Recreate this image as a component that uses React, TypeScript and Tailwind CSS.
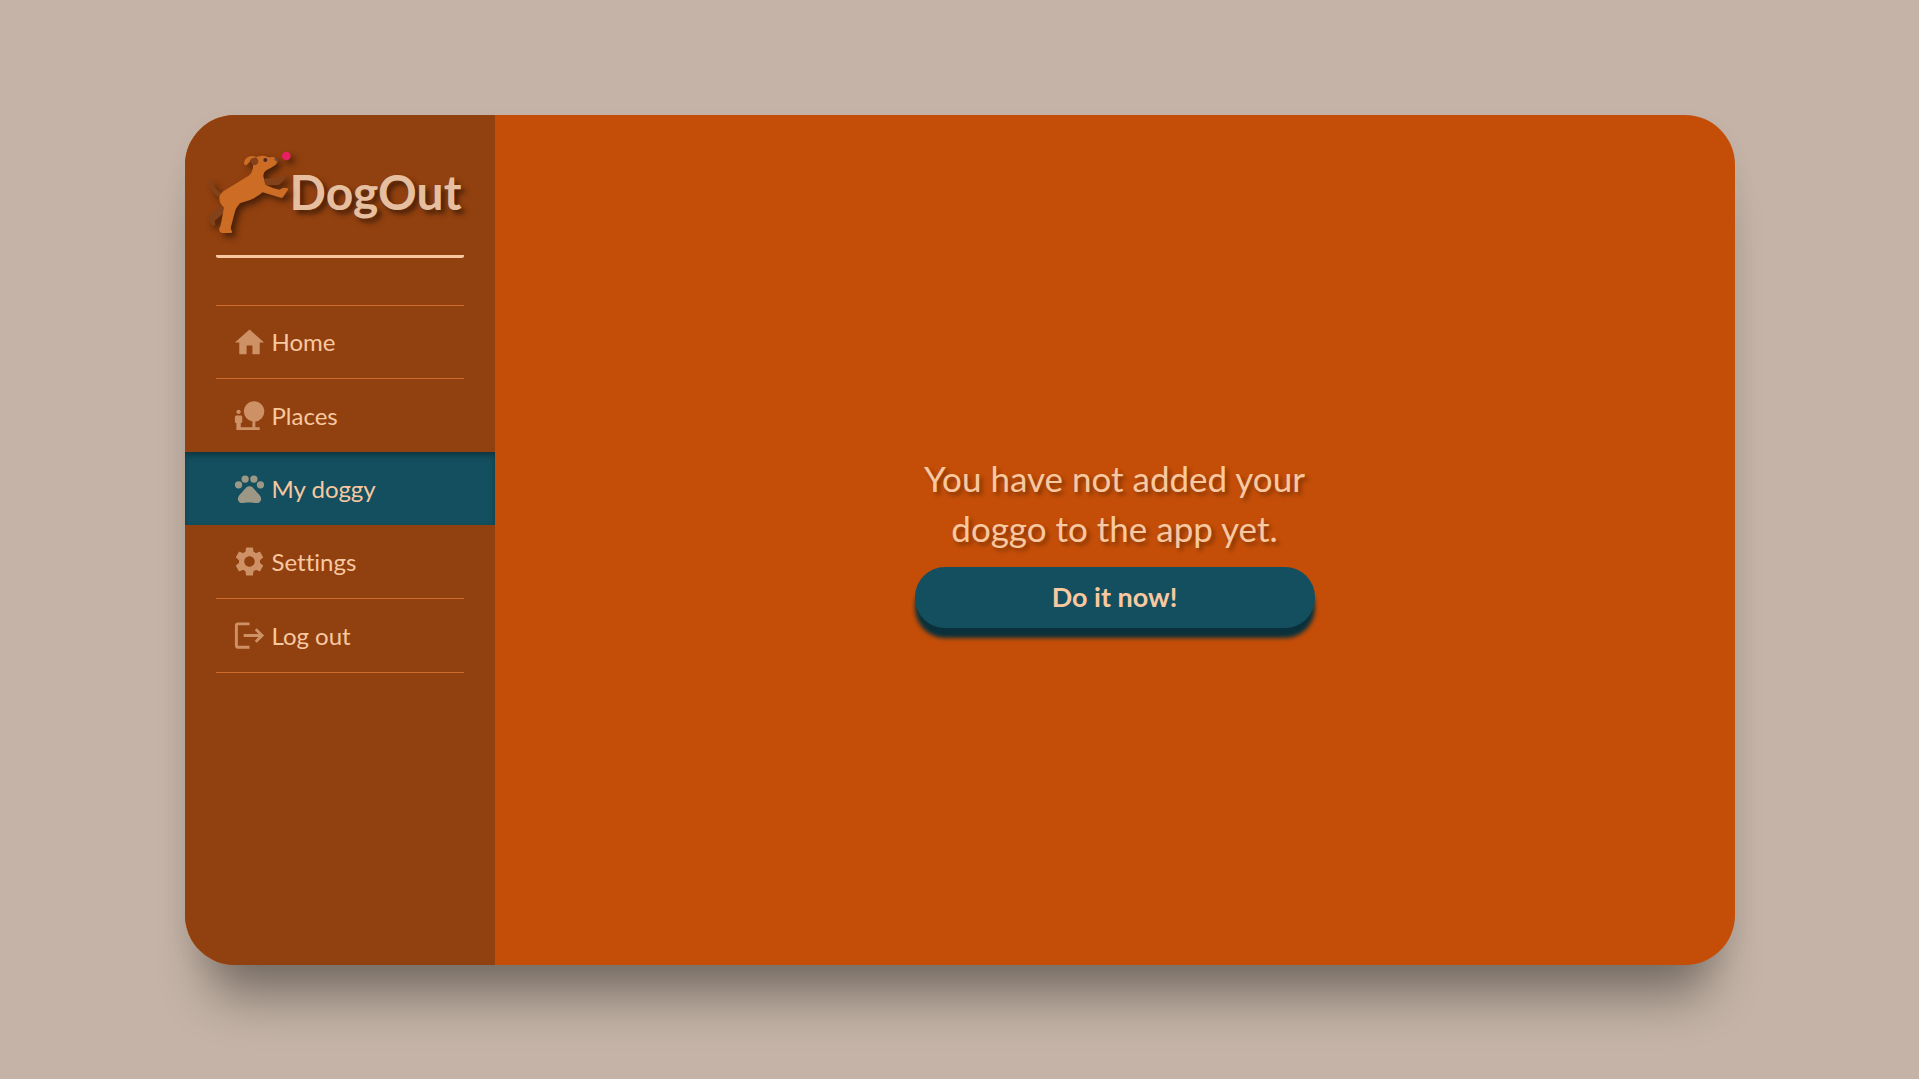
import { MdHome, MdNaturePeople, MdPets, MdSettings, MdLogout } from "react-icons/md";
import type { IconType } from "react-icons";

type NavItem = { label: string; icon: IconType; active?: boolean };

const items: NavItem[] = [
  { label: "Home", icon: MdHome },
  { label: "Places", icon: MdNaturePeople },
  { label: "My doggy", icon: MdPets, active: true },
  { label: "Settings", icon: MdSettings },
  { label: "Log out", icon: MdLogout },
];

function DogLogo() {
  return (
    <svg
      viewBox="20 60 261 255"
      className="h-[85px] w-[87px] shrink-0 drop-shadow-[4px_4px_3px_rgba(0,0,0,0.5)]"
      aria-hidden="true"
    >
      <path d="M28 150 Q34 149 37 158 Q42 178 66 191 L58 204 Q30 188 27 160Z" fill="#84421a" />
      <path d="M64 228 L28 255 Q20 264 26 274 L38 289 L45 285 L43 272 L76 243Z" fill="#84421a" />
      <path d="M192 146 L228 144 L250 135 Q259 137 254 146 L239 162 Q235 166 228 165 L193 166Z" fill="#84421a" />
      <path d="M131 103 Q130 87 145 80 Q157 75 169 82 L151 92 L138 106Z" fill="#cd6c25" />
      <path
        d="M158 85 Q176 75 195 78 Q202 83 216 81 Q227 82 232 93 Q231 101 221 108 Q208 116 198 121 Q189 127 189 139 L195 164 Q217 175 237 179 L247 174 Q263 172 264 178 L248 202 Q244 205 236 202 L187 187 Q163 207 137 214 L119 220 Q110 230 105 241 L92 290 Q90 298 96 305 Q96 309 91 309 L67 309 Q55 307 57 295 L61 286 L71 233 Q56 218 57 205 Q57 193 70 183 L145 137 Q154 131 158 113Z"
        fill="#cd6c25"
      />
      <path d="M148 91 Q157 80 169 83 Q177 91 172 101 Q166 106 158 106Z" fill="#84421a" />
      <circle cx="195" cy="90" r="6" fill="#4a2a2b" />
      <path d="M221 86 Q229 82 232 88 L232 94 Q227 96 221 86Z" fill="#65484a" />
      <circle cx="258" cy="78" r="13" fill="#e91e63" />
    </svg>
  );
}

export default function App() {
  return (
    <div className="flex min-h-screen justify-center bg-[#c4b3a6] px-6 pt-[115px] pb-[114px] font-['Lato',sans-serif] text-[#f8c8a0] [font-variant-ligatures:none]">
      <div className="flex w-full max-w-[1550px] overflow-hidden rounded-[50px] bg-[#c44e08] shadow-[0_55px_50px_-25px_rgba(0,0,0,0.38),0_10px_25px_rgba(0,0,0,0.05)]">
        <aside className="w-1/5 min-w-[310px] bg-[#91400f]">
          <header className="mx-[31px] flex h-[143px] items-center rounded-xs border-b-3 pt-3.5">
            <div className="-ml-[9px] flex items-center">
              <DogLogo />
              <h1 className="-ml-1 text-5xl font-bold text-[#e5bfa0] [text-shadow:4px_4px_5px_rgba(0,0,0,0.5)]">DogOut</h1>
            </div>
          </header>
          <nav className="mt-[47px]">
            <ul>
              {items.map(({ label, icon: Icon, active }, i) => (
                <li
                  key={label}
                  className={
                    active
                      ? "bg-[#144f5f] px-[31px] shadow-[inset_0_4px_6px_-1px_rgba(0,0,0,0.35)]"
                      : "px-[31px]"
                  }
                >
                  <a
                    href="#"
                    className={
                      "flex items-center gap-[5px] px-4 text-2xl " +
                      (i === 0
                        ? "h-[74px] border-y border-[#cd6c2e]"
                        : active || i === 1
                          ? "h-[73px]"
                          : "h-[74px] border-b border-[#cd6c2e]")
                    }
                  >
                    <Icon className="size-[35px] opacity-60" aria-hidden="true" />
                    {label}
                  </a>
                </li>
              ))}
            </ul>
          </nav>
        </aside>
        <main className="flex flex-1 flex-col items-center justify-center gap-3.5">
          <h2 className="w-[400px] text-center text-[35px] leading-[50px] [text-shadow:3px_3px_4px_rgba(0,0,0,0.35)]">
            You have not added your doggo to the app yet.
          </h2>
          <button className="h-[61px] w-[400px] rounded-[30px] bg-[#144f5f] text-[27px] font-bold shadow-[0_10px_4px_#0a313b]">
            Do it now!
          </button>
        </main>
      </div>
    </div>
  );
}
